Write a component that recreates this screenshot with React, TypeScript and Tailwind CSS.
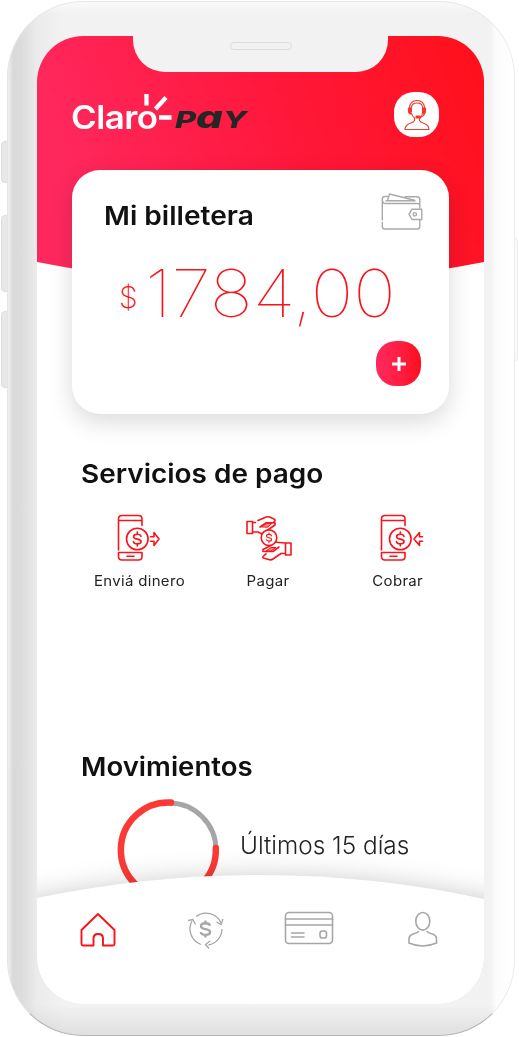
import React from "react";

const font = "font-['Inter','Noto_Sans',sans-serif]";

function Dollar({ cx, cy, s }: { cx: number; cy: number; s: number }) {
  return (
    <path
      transform={`translate(${cx} ${cy}) scale(${s})`}
      d="M3.6 -2.6C3.2 -4.2 1.6 -4.6 0 -4.6C-2 -4.6 -3.6 -3.9 -3.6 -2.3C-3.6 1 3.7 -0.8 3.7 2.4C3.7 4 2 4.7 0 4.7C-2 4.7 -3.5 4.1 -3.8 2.5M0 -6.8V-4.6M0 4.7V6.8"
    />
  );
}

function PhoneMoney({ incoming }: { incoming?: boolean }) {
  return (
    <svg width="44" height="48" viewBox="0 0 44 48" fill="none" stroke="#f8141c" strokeWidth="1.6" strokeLinecap="round" strokeLinejoin="round">
      <path d="M1.5 36V5Q1.5 1.5 5 1.5H21.500Q25 1.500 25 5V11.500M1.500 6.500H25" />
      <path d="M1.500 38.500H25V42.500Q25 46 21.500 46H5Q1.500 46 1.500 42.500ZM10 42.300H17" />
      <circle cx="20.300" cy="25" r="10.800" />
      <Dollar cx={20.3} cy={25} s={1.02} />
      {incoming ? (
        <path d="M42.500 22.700H39.500V18.500L34 25L39.500 31.500V27.300H42.500" />
      ) : (
        <path d="M33.500 22.700H37V18.500L42 25L37 31.500V27.300H33.500" />
      )}
    </svg>
  );
}

function Hands() {
  return (
    <svg width="46" height="48" viewBox="0 0 46 48" fill="none" stroke="#f8141c" strokeWidth="1.600" strokeLinecap="round" strokeLinejoin="round">
      <path d="M1 7.500H6.500V19.500H1ZM6.500 8.500H9.500M12 6.500L19 3.500Q21 2.300 23.500 3L28 5Q30 6 28.500 7.500L27 9M6.500 18H12L15 19.500H19M14 13L20 8.800H29V11L21 16.500" />
      <path d="M15.500 12.700L20.500 9.300H26L22 13Z" fill="#f8141c" fillOpacity=".55" strokeWidth="1" />
      <path d="M45 29H39.500V41H45ZM39.500 29L27 28M39.500 39.500H35L27 45Q25 46.500 22.500 45.500L17.500 44Q16 43.300 17.500 42L20 39.800M25 31.500L17 35.500V37.500H27L33 33" />
      <path d="M20 37L25 33.500H30L25 37Z" fill="#f8141c" fillOpacity=".55" strokeWidth="1" />
      <circle cx="23" cy="23.700" r="7.800" fill="#fff" />
      <Dollar cx={23} cy={23.7} s={0.72} />
    </svg>
  );
}

function Wallet() {
  return (
    <svg width="42" height="38" viewBox="0 0 42 38" fill="none" stroke="#aaa" strokeWidth="1.400" strokeLinecap="round" strokeLinejoin="round">
      <path d="M1.300 27V6Q1.300 3.500 4 3.500H7M1.300 29.500V33.500Q1.300 36 4 36H36Q38.800 36 38.800 33.500V27M38.800 15V12.500Q38.800 10.500 36 10.500H4Q1.300 10.500 1.300 6M24 3.700H36Q38.800 3.700 38.800 6.500V12" />
      <path d="M5 7.800H34M6.500 7.500L8.500 1L33.500 7.300" />
      <path d="M40.800 16.200H31L28 21.200L31 26.500H40.800Z" />
      <circle cx="33.800" cy="21.300" r="1.700" />
    </svg>
  );
}

function Service({ label, children }: { label: string; children: React.ReactNode }) {
  return (
    <div className="flex w-32 flex-col items-center">
      {children}
      <span className="mt-[9px] scale-x-[1.070] whitespace-nowrap text-[14px] leading-5 tracking-[0.3px] text-[#222]">{label}</span>
    </div>
  );
}

export default function App() {
  return (
    <div className={`relative flex h-[1037px] w-[519px] overflow-hidden bg-white ${font}`}>
      <div className="absolute left-[1px] top-[141px] h-[42px] w-[9px] rounded-l-[4px] border border-[#ddd] bg-[#e8e8e8]" />
      <div className="absolute left-[1px] top-[215px] h-[77px] w-[9px] rounded-l-[4px] border border-[#ddd] bg-[#e8e8e8]" />
      <div className="absolute left-[1px] top-[311px] h-[77px] w-[9px] rounded-l-[4px] border border-[#ddd] bg-[#e8e8e8]" />
      <div className="absolute left-[511px] top-[238px] h-[123px] w-[7px] rounded-r-[3px] border border-[#eee] bg-[#fafafa]" />

      <div className="relative ml-[7px] mt-[1px] h-[1035px] w-[508px] rounded-[76px] border border-b-[#b5b5b5] border-l-[#e4e4e4] border-r-[#ececec] border-t-[#e8e8e8] bg-[linear-gradient(180deg,rgba(255,255,255,.6)_0,rgba(255,255,255,0)_12px,rgba(0,0,0,0)_1003px,rgba(0,0,0,.07)_1030px),linear-gradient(90deg,#f0f0f0_0,#d9d9d9_5px,#dcdcdc_13px,#ebebeb_29px,#f2f2f2_55px,#f2f2f2_440px,#f2f2f2_482px,#fcfcfc_488px,#fff_508px)] px-[29px] pt-[34px]">
        <main className="relative flex h-[968px] w-[447px] flex-col overflow-hidden rounded-[46px] bg-white">
          <svg className="absolute left-0 top-0" width="447" height="270" viewBox="0 0 447 270">
            <defs>
              <linearGradient id="head" x1="0" y1=".3" x2="1" y2=".1">
                <stop offset="0" stopColor="#ff285e" />
                <stop offset=".5" stopColor="#ff183c" />
                <stop offset="1" stopColor="#ff101a" />
              </linearGradient>
            </defs>
            <path d="M0 0H447V226Q224 270 0 226Z" fill="url(#head)" />
          </svg>

          <div className="absolute left-[96px] top-0 flex h-9 w-[255px] justify-center rounded-b-[32px] bg-[#f2f2f2]">
            <div className="mt-[6px] h-[8px] w-[62px] rounded-full border border-[#dcdcdc]" />
          </div>

          <header className="relative mt-[56px] flex h-[45px] items-center justify-between pl-[34px] pr-[45px]">
            <div className="relative flex h-[45px] items-start">
              <span className="w-[86px] origin-left scale-x-[1.090] text-[32px] font-semibold leading-[51px] tracking-[-0.5px] text-white">Claro</span>
              <svg className="absolute left-[70px] top-0" width="32" height="30" viewBox="0 0 32 30" stroke="#fff" strokeWidth="4.300">
                <path d="M5.500 2V13.500M14.500 17L25 5.500M18 25.500H30.500" />
              </svg>
              <span className="ml-[18px] flex origin-left scale-x-[1.400] items-baseline text-[23px] font-extrabold italic leading-[56px] text-[#262626]">
                P<span className="text-[30px] leading-none">a</span>Y
              </span>
            </div>
            <div className="flex h-[45px] w-[45px] items-center justify-center rounded-[20px] bg-white">
              <svg width="26" height="32" viewBox="0 0 26 32" fill="none" stroke="#f0392f" strokeWidth="1.100" strokeLinejoin="round">
                <path d="M7.500 13V8Q8 4 13 4Q18 4 18.500 8V14Q18 18 15.500 19.500V21.500Q16 23 19 24Q25 26 25 30.500H1Q1 26 7 24Q10 23 10.500 21.500V19Q8 17.500 7.500 14" />
                <path d="M5.500 9Q6 1.500 13 1.500Q20 1.500 20.500 9M20.500 14.500Q20 18 15 18" />
                <path d="M4.500 9H7V15H6Q4 14 4.500 9ZM19 9H21.500Q22 14 20 15H19ZM12 17H16V19H12Z" fill="#f0392f" />
              </svg>
            </div>
          </header>

          <section className="relative mx-[35px] mt-[33px] flex h-[244px] flex-col rounded-[28px] bg-white pl-8 pr-[28px] pt-[25px] shadow-[0_8px_24px_rgba(0,0,0,0.15)]">
            <div className="flex items-start justify-between">
              <h1 className="mt-[5px] origin-left scale-x-[1.080] whitespace-nowrap text-[26px] font-semibold leading-8 text-[#111]">Mi billetera</h1>
              <div className="-mr-[2px] -mt-[2px]"><Wallet /></div>
            </div>
            <div className="mt-[30px] flex h-[64px] items-end whitespace-nowrap pl-[15px] leading-none text-[#fb1118]">
              <span className="w-[26px] pb-[14px] text-[30px] font-extralight">$</span>
              <span className="origin-left scale-x-[1.090] text-[66px] font-thin">1784,00</span>
            </div>
            <button className="ml-auto mt-[15px] flex h-[45px] w-[45px] items-center justify-center rounded-[20px] bg-gradient-to-r from-[#ff285e] to-[#ff0c18]">
              <svg width="14" height="14" viewBox="0 0 14 14" stroke="#fff" strokeWidth="3"><path d="M7 0V14M0 7H14" /></svg>
            </button>
          </section>

          <h2 className="ml-[44px] mt-[44px] w-fit origin-left scale-x-[1.075] whitespace-nowrap text-[26px] font-semibold leading-8 text-[#111]">Servicios de pago</h2>
          <div className="mt-[24px] flex justify-between pl-[38px] pr-[22px]">
            <Service label="Enviá dinero"><PhoneMoney /></Service>
            <Service label="Pagar"><Hands /></Service>
            <Service label="Cobrar"><div className="pl-[8px]"><PhoneMoney incoming /></div></Service>
          </div>

          <h2 className="ml-[44px] mt-[160px] w-fit origin-left scale-x-[1.060] whitespace-nowrap text-[26px] font-semibold leading-8 text-[#111]">Movimientos</h2>
          <div className="mt-[15px] flex pl-[80px]">
            <svg width="104" height="104" viewBox="0 0 104 104" fill="none" strokeLinecap="round">
              <path d="M52 5A47 47 0 0 1 99 52" stroke="#a6a6a4" strokeWidth="5" />
              <path d="M98.800 50A47.500 47.500 0 1 1 54 4.500" stroke="#fb3a36" strokeWidth="6.500" />
            </svg>
            <p className="ml-[19px] mt-[32px] h-8 origin-left scale-x-[1.015] whitespace-nowrap text-[24px] font-light leading-8 text-[#222]">Últimos 15 días</p>
          </div>

          <nav className="absolute bottom-0 left-0 h-[169px] w-[447px]">
            <svg className="absolute left-0 top-0" width="447" height="169" viewBox="0 0 447 169">
              <defs><filter id="haze" x="-20%" y="-30%" width="140%" height="160%"><feGaussianBlur stdDeviation="14" /></filter></defs>
              <path d="M-30 72Q224 14 477 72V169H-30Z" fill="#000" fillOpacity=".24" filter="url(#haze)" />
              <path d="M0 63Q110 40 224 40T447 64V169H0Z" fill="#fff" />
            </svg>
            <div className="relative flex items-start pl-[42px] pt-[76px]">
              <svg width="38" height="37" viewBox="0 0 38 37" fill="none" stroke="#fb1118" strokeWidth="1.900" strokeLinejoin="round"><path d="M2.500 19L19 3L35.500 19V33Q35.500 34.500 34 34.500H24V27.500Q24 23 19.200 23Q14.500 23 14.500 27.500V34.500H4Q2.500 34.500 2.500 33Z" /></svg>
              <svg className="ml-[70px]" width="38" height="38" viewBox="0 0 38 38" fill="none" stroke="#a6a6a6" strokeWidth="1.300">
                <path d="M9 5.500A16.500 16.500 0 0 1 34 12M35 18A16.500 16.500 0 0 1 21.500 34M14 33.500A16.500 16.500 0 0 1 5 10" />
                <path d="M29.500 11L34 13.500L36 8M1 9.500L6 8.500L8.500 13.500M23 30L18.500 33.500L22 37.500" />
                <g strokeWidth="1.900"><Dollar cx={18.5} cy={18} s={1.25} /></g>
              </svg>
              <svg className="ml-[59px]" width="50" height="34" viewBox="0 0 50 34" fill="none" stroke="#a6a6a6" strokeWidth="1.600" strokeLinecap="round">
                <rect x="1.500" y="1.500" width="47" height="31" rx="3.500" />
                <path d="M1.500 8H48.500M1.500 14H48.500M7.500 22H20M7.500 26H20" />
                <rect x="36" y="20" width="6.500" height="7" rx="2.300" />
              </svg>
              <svg className="ml-[73px]" width="31" height="37" viewBox="0 0 31 37" fill="none" stroke="#a6a6a6" strokeWidth="1.600" strokeLinecap="round">
                <ellipse cx="15.800" cy="10.300" rx="7" ry="8.800" />
                <path d="M11.500 20.500Q10 22 6 23Q2 24.500 2 28V32Q15.500 38 29.500 32V28Q29.500 24.500 25.500 23Q21.500 22 20 20.500" />
              </svg>
            </div>
          </nav>
        </main>
      </div>
    </div>
  );
}
